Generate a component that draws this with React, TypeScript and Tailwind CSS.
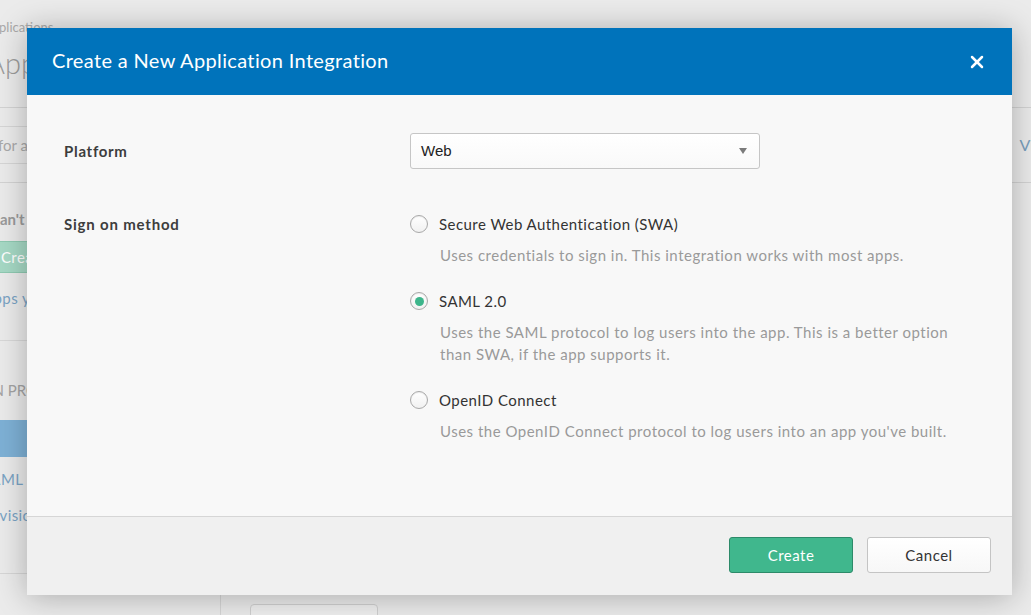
import { X } from "lucide-react";

const options = [
  {
    id: "swa",
    label: "Secure Web Authentication (SWA)",
    desc: ["Uses credentials to sign in. This integration works with most apps."],
  },
  {
    id: "saml",
    label: "SAML 2.0",
    desc: [
      "Uses the SAML protocol to log users into the app. This is a better option",
      "than SWA, if the app supports it.",
    ],
  },
  {
    id: "oidc",
    label: "OpenID Connect",
    desc: ["Uses the OpenID Connect protocol to log users into an app you've built."],
  },
];

function Radio({ checked }: { checked: boolean }) {
  return (
    <span className="flex h-[18px] w-[18px] shrink-0 items-center justify-center rounded-full border border-[#a8a8a8] bg-gradient-to-b from-white to-[#f1f1f1] shadow-[inset_0_1px_1px_rgba(0,0,0,0.08)]">
      {checked && <span className="h-[9px] w-[9px] rounded-full bg-[#3db58b]" />}
    </span>
  );
}

// dimmed page that sits behind the dialog
function BackgroundPage() {
  return (
    <div className="h-[615px] w-[1031px] overflow-hidden bg-[#ebebeb] font-['Lato',sans-serif] text-[#a9a9a9]">
      <div className="ml-[-17px] pt-[19px] text-[13px] leading-4">Applications</div>
      <div className="ml-[-14px] mt-[10px] text-[29px] font-light leading-9 text-[#9c9c9c]">Applications</div>
      <div className="mt-[26px] flex h-[76px] items-center justify-between border-y border-[#d3d3d3]">
        <div className="ml-[-52px] flex h-[38px] w-[240px] items-center border-y border-[#d6d6d6] pl-[2px] text-[15px]">
          Search for an application
        </div>
        <div className="mr-[-24px] text-[16px] text-[#7a9fbd]">View</div>
      </div>
      <div className="flex">
        <div className="ml-[-10px] w-[231px] shrink-0 border-r border-[#d6d6d6]">
          <div className="pt-[26px] text-[15px] font-bold leading-5 text-[#9a9a9a]">Can't find an app?</div>
          <div className="mt-[12px] flex h-[32px] w-[150px] items-center rounded-[3px] border border-[#8fcab2] bg-[#a6d9c5] pl-[10px] text-[15px] tracking-[0.4px] text-white">
            Create New App
          </div>
          <div className="ml-[-7px] mt-[15px] text-[15px] leading-5 tracking-[0.4px] text-[#7aa3c4]">Apps you created (0) →</div>
          <div className="mt-[32px] border-t border-[#d8d8d8] pt-[39px] text-[15px] uppercase leading-5 text-[#a3a3a3]">
            <span className="ml-[-85px]">Integration Properties</span>
          </div>
          <div className="mt-[20px] h-[37px] bg-[#7eb1d6]" />
          <div className="ml-[-8px] mt-[12px] text-[15px] leading-5 tracking-[0.4px] text-[#7aa3c4]">SAML</div>
          <div className="ml-[-14px] mt-[16px] text-[15px] leading-5 tracking-[0.4px] text-[#7aa3c4]">Provisioning</div>
          <div className="mt-[48px] border-t border-[#d6d6d6]" />
        </div>
        <div className="flex-1 pl-[29px] pt-[421px]">
          <div className="flex items-center gap-5">
            <div className="h-[36px] w-[128px] rounded-[4px] border border-[#d0d0d0] bg-[#efefef]" />
            <div className="text-[14px]">Web Integrations</div>
          </div>
        </div>
      </div>
    </div>
  );
}

export default function App() {
  return (
    <div className="relative h-[615px] w-[1031px] overflow-hidden">
      <BackgroundPage />

      {/* dialog */}
      <div className="absolute left-[27px] top-[28px] flex h-[567px] w-[985px] flex-col bg-[#f8f8f8] font-['Lato',sans-serif] shadow-[0_2px_30px_rgba(0,0,0,0.28)]">
        <div className="flex h-[67px] shrink-0 items-center justify-between bg-[#0073bb] pb-[3px] pl-[25px] pr-[25px]">
          <p className="text-[20px] tracking-[0.35px] text-white">Create a New Application Integration</p>
          <X className="mt-[3px] h-[20px] w-[20px] text-white" strokeWidth={3} />
        </div>

        <div className="flex-1 pt-[38px]">
          <div className="flex items-center">
            <div className="w-[383px] pl-[37px] text-[15px] font-bold tracking-[0.7px] text-[#3d3d3d]">Platform</div>
            <div className="flex h-[36px] w-[350px] items-center justify-between rounded-[3px] border border-[#c6c6c6] bg-gradient-to-b from-white to-[#f9f9f9] pl-[10px] pr-[12px] font-['Liberation_Sans',sans-serif] text-[15px] text-[#222]">
              <span>Web</span>
              <span className="h-0 w-0 border-x-[4px] border-t-[6px] border-x-transparent border-t-[#7b7b7b]" />
            </div>
          </div>

          <div className="mt-[44px] flex">
            <div className="w-[383px] pl-[37px] text-[15px] font-bold leading-[22px] tracking-[0.8px] text-[#3d3d3d]">
              Sign on method
            </div>
            <div className="flex flex-col gap-[24px]">
              {options.map((o) => (
                <div key={o.id}>
                  <div className="flex h-[22px] items-center gap-[11px] text-[15px] tracking-[0.45px] text-[#333]">
                    <Radio checked={o.id === "saml"} />
                    <span>{o.label}</span>
                  </div>
                  <div className="mt-[9px] pl-[30px] text-[15px] leading-[22px] tracking-[0.5px] text-[#9a9a9a]">
                    {o.desc.map((d) => (
                      <p key={d}>{d}</p>
                    ))}
                  </div>
                </div>
              ))}
            </div>
          </div>
        </div>

        <div className="flex h-[79px] shrink-0 items-start justify-end gap-[14px] border-t border-[#d6d6d6] bg-[#f0f0f0] pr-[21px] pt-[20px]">
          <button className="h-[36px] w-[124px] rounded-[3px] border border-[#2d8a69] bg-[#40b78d] text-[15px] tracking-[0.5px] text-white">
            Create
          </button>
          <button className="h-[36px] w-[124px] rounded-[3px] border border-[#c4c4c4] bg-gradient-to-b from-white to-[#f7f7f7] text-[15px] tracking-[0.5px] text-[#333]">
            Cancel
          </button>
        </div>
      </div>
    </div>
  );
}
